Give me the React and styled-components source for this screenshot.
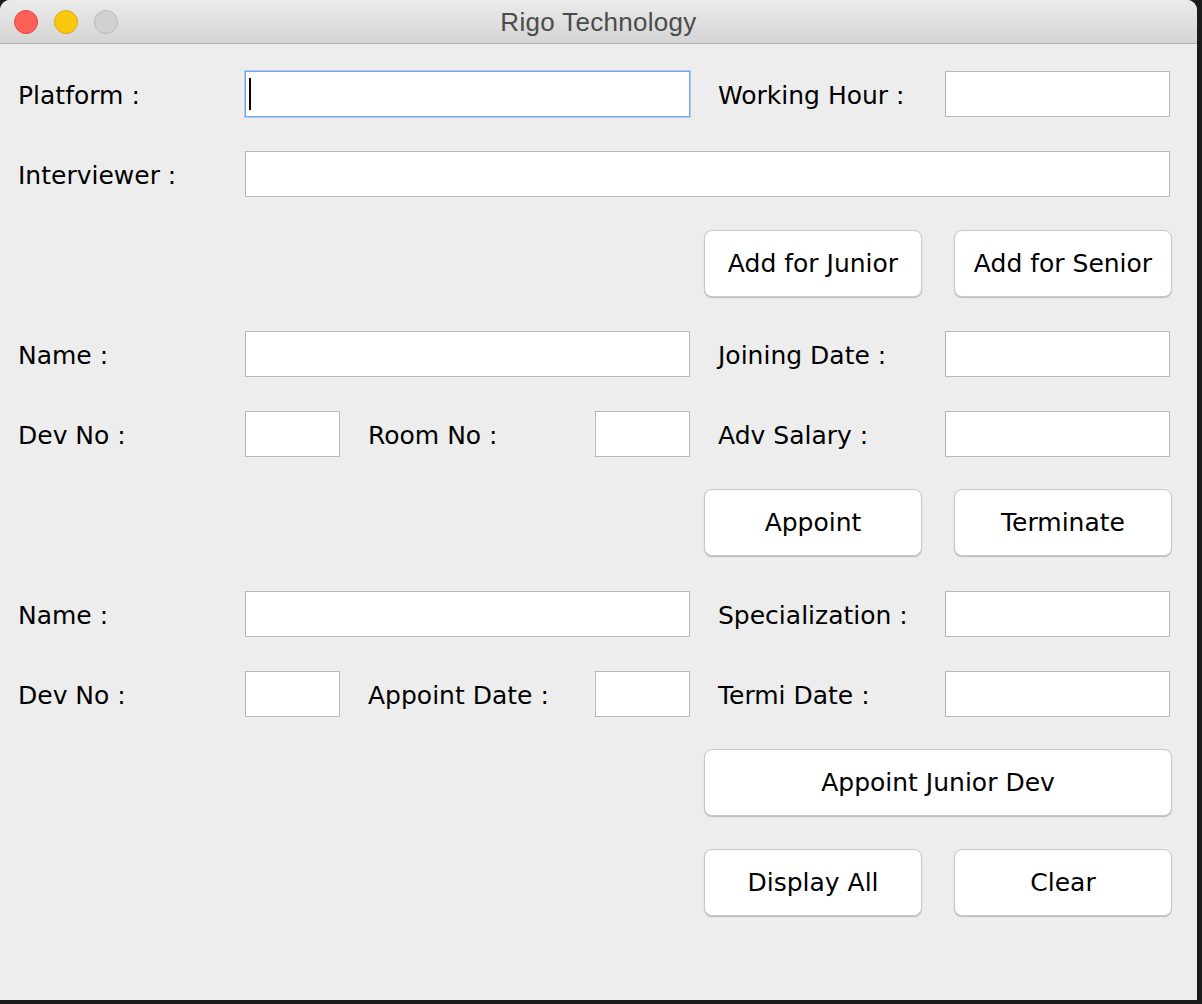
import React from 'react';
import styled, { createGlobalStyle } from 'styled-components';

const GlobalStyle = createGlobalStyle`
    html, body {
        margin : 0 ;
        padding : 0 ;
        background : #1b1b1b ;
    }
`;

// 창 전체
const Window = styled.div`
    width : 1197px ;
    height : 1000px ;
    background : #ededed ;
    border-radius : 10px 10px 0 0 ;
    overflow : hidden ;
    font-family : "DejaVu Sans", "Noto Sans", sans-serif ;
    color : #000 ;
`;

const TitleBar = styled.div`
    height : 43px ;
    border-bottom : 1px solid #b1b1b1 ;
    background : linear-gradient(#ebebeb, #d4d4d4) ;

    display : grid ;
    grid-template-columns : 1fr auto 1fr ;
    align-items : center ;
`;

const Lights = styled.div`
    display : flex ;
    gap : 16px ;
    padding-left : 14px ;
`;

const Light = styled.span`
    width : 22px ;
    height : 22px ;
    border-radius : 50% ;
    background : ${props => props.$fill} ;
    border : 1px solid ${props => props.$edge} ;
`;

const Title = styled.div`
    font-family : "Liberation Sans", Arial, sans-serif ;
    font-size : 26px ;
    color : #4c4c4c ;
    letter-spacing : 0.3px ;
    padding-top : 1px ;
`;

const Form = styled.div`
    padding : 27px 0 0 18px ;
    display : flex ;
    flex-direction : column ;
`;

const FieldRow = styled.div`
    margin-top : ${props => props.$space}px ;
    height : 46px ;
    display : grid ;
    grid-template-columns : 227px 95px 28px 227px 95px 28px 227px 225px ;
    grid-template-rows : 46px ;
    align-items : center ;
`;

const Label = styled.div`
    grid-column : ${props => props.$col} ;
    font-size : 25px ;
    white-space : nowrap ;
    height : 46px ;
    box-sizing : border-box ;
    line-height : 42px ;
    padding-top : 4px ;
`;

const Field = styled.div`
    grid-column : ${props => props.$col} ;
    height : 46px ;
    box-sizing : border-box ;
    background : #fff ;
    border : 1px solid ${props => props.$focused ? '#76a6e6' : '#b8b8b8'} ;
    box-shadow : ${props => props.$focused ? '0 0 0 1px #a9c9f0' : 'none'} ;
    display : flex ;
    align-items : center ;
    padding-left : 3px ;
`;

const Caret = styled.span`
    width : 2px ;
    height : 32px ;
    background : #000 ;
`;

const ButtonRow = styled.div`
    margin-top : ${props => props.$space}px ;
    margin-left : 686px ;
    width : 468px ;
    display : flex ;
    gap : 32px ;
`;

const Button = styled.button`
    flex : 1 ;
    height : 67px ;
    background : #fff ;
    border : 1px solid #c9c9c9 ;
    border-radius : 8px ;
    box-shadow : 0 1px 1px rgba(0, 0, 0, 0.22) ;
    font-family : "DejaVu Sans", "Noto Sans", sans-serif ;
    font-size : 25px ;
    color : #000 ;
    padding : 0 ;
`;

const rows = [
    { type : 'fields', space : 0, items : [
        { label : 'Platform :', col : '1' },
        { field : true, col : '2 / 6', focused : true },
        { label : 'Working Hour :', col : '7' },
        { field : true, col : '8' },
    ]},
    { type : 'fields', space : 34, items : [
        { label : 'Interviewer :', col : '1' },
        { field : true, col : '2 / 9' },
    ]},
    { type : 'buttons', space : 33, items : [ 'Add for Junior', 'Add for Senior' ] },
    { type : 'fields', space : 34, items : [
        { label : 'Name :', col : '1' },
        { field : true, col : '2 / 6' },
        { label : 'Joining Date :', col : '7' },
        { field : true, col : '8' },
    ]},
    { type : 'fields', space : 34, items : [
        { label : 'Dev No :', col : '1' },
        { field : true, col : '2' },
        { label : 'Room No :', col : '4' },
        { field : true, col : '5' },
        { label : 'Adv Salary :', col : '7' },
        { field : true, col : '8' },
    ]},
    { type : 'buttons', space : 32, items : [ 'Appoint', 'Terminate' ] },
    { type : 'fields', space : 35, items : [
        { label : 'Name :', col : '1' },
        { field : true, col : '2 / 6' },
        { label : 'Specialization :', col : '7' },
        { field : true, col : '8' },
    ]},
    { type : 'fields', space : 34, items : [
        { label : 'Dev No :', col : '1' },
        { field : true, col : '2' },
        { label : 'Appoint Date :', col : '4' },
        { field : true, col : '5' },
        { label : 'Termi Date :', col : '7' },
        { field : true, col : '8' },
    ]},
    { type : 'buttons', space : 32, items : [ 'Appoint Junior Dev' ] },
    { type : 'buttons', space : 33, items : [ 'Display All', 'Clear' ] },
];

const App = () => {
    return (
        <>
            <GlobalStyle />
            <Window>
                <TitleBar>
                    <Lights>
                        <Light $fill="#fe5f57" $edge="#e1463f" />
                        <Light $fill="#f9c80e" $edge="#dea41c" />
                        <Light $fill="#d1d1d1" $edge="#b9b9b9" />
                    </Lights>
                    <Title>Rigo Technology</Title>
                </TitleBar>
                <Form>
                    {rows.map((row, index) => row.type === 'buttons' ? (
                        <ButtonRow key={index} $space={row.space}>
                            {row.items.map(text => <Button key={text}>{text}</Button>)}
                        </ButtonRow>
                    ) : (
                        <FieldRow key={index} $space={row.space}>
                            {row.items.map((item, i) => item.field ? (
                                <Field key={i} $col={item.col} $focused={item.focused}>
                                    {item.focused && <Caret />}
                                </Field>
                            ) : (
                                <Label key={i} $col={item.col}>{item.label}</Label>
                            ))}
                        </FieldRow>
                    ))}
                </Form>
            </Window>
        </>
    );
};

export default App;
